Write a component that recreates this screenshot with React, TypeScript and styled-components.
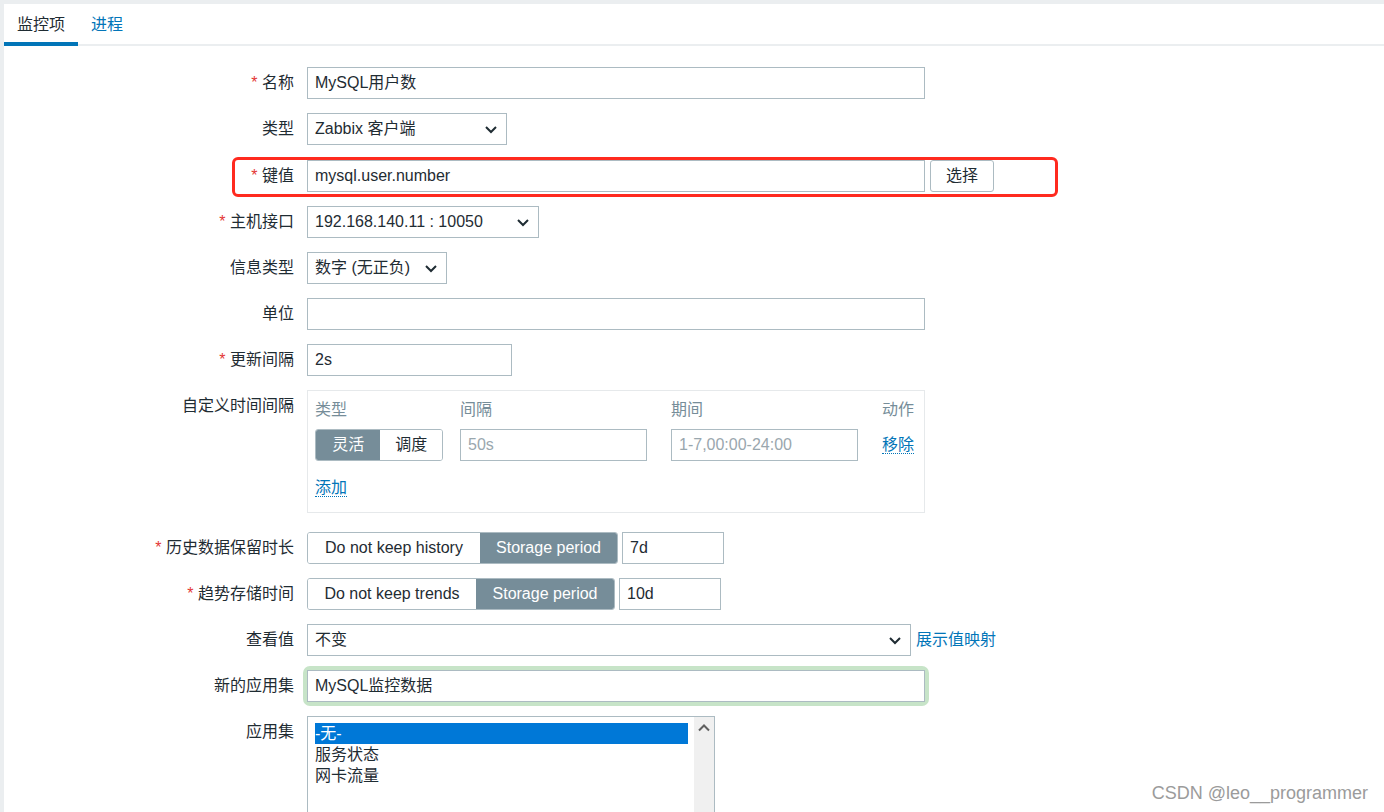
import React, { ReactElement } from 'react';
import styled, { createGlobalStyle } from 'styled-components';

const GlobalStyle = createGlobalStyle`
  html, body {
    margin: 0;
    padding: 0;
    background: #ebeef0;
    font-family: 'Liberation Sans', 'Noto Sans CJK SC', sans-serif;
    font-size: 16px;
    color: #1f2c33;
  }
  * {
    box-sizing: border-box;
  }
`;

const Page = styled.div`
  position: relative;
  height: 812px;
  overflow: hidden;
  padding: 4px 0 0 4px;
`;

const Panel = styled.div`
  background: #fff;
  height: 100%;
`;

const TabBar = styled.div`
  display: flex;
  height: 42px;
  border-bottom: 2px solid #ebeef0;
`;

const Tab = styled.div<{ $active?: boolean }>`
  padding: 4px 13px 0;
  height: 42px;
  line-height: 34px;
  color: ${(p) => (p.$active ? '#1f2c33' : '#0275b8')};
  border-bottom: 4px solid ${(p) => (p.$active ? '#0275b8' : 'transparent')};
`;

const Form = styled.div`
  display: flex;
  flex-direction: column;
  gap: 14px;
  padding-top: 21px;
`;

const Row = styled.div<{ $mt?: number; $mb?: number }>`
  position: relative;
  display: grid;
  grid-template-columns: 290px 1fr;
  column-gap: 13px;
  align-items: start;
  margin-top: ${(p) => p.$mt || 0}px;
  margin-bottom: ${(p) => p.$mb || 0}px;
`;

const Label = styled.div<{ $required?: boolean }>`
  text-align: right;
  line-height: 32px;
  white-space: nowrap;

  &::before {
    content: ${(p) => (p.$required ? "'* '" : "''")};
    color: #e33734;
  }
`;

const Field = styled.div`
  display: flex;
  align-items: center;
  gap: 5px;
`;

const Input = styled.div<{ $w: number; $muted?: boolean }>`
  width: ${(p) => p.$w}px;
  height: 32px;
  line-height: 30px;
  border: 1px solid #acbbc2;
  background: #fff;
  padding: 0 7px;
  color: ${(p) => (p.$muted ? '#9aa7ae' : '#1f2c33')};
  white-space: nowrap;
  overflow: hidden;
`;

const Select = styled(Input)`
  display: flex;
  align-items: center;
  justify-content: space-between;
  padding-right: 8px;
`;

const Button = styled.div`
  height: 32px;
  line-height: 30px;
  padding: 0 15px;
  border: 1px solid #acbbc2;
  border-radius: 3px;
  background: #fff;
`;

const Segmented = styled.div`
  display: flex;
  height: 32px;
  border: 1px solid #acbbc2;
  border-radius: 3px;
  overflow: hidden;
`;

const Segment = styled.div<{ $active?: boolean; $w: number }>`
  width: ${(p) => p.$w}px;
  text-align: center;
  line-height: 30px;
  white-space: nowrap;
  background: ${(p) => (p.$active ? '#768d99' : '#fff')};
  color: ${(p) => (p.$active ? '#fff' : '#1f2c33')};
`;

const Link = styled.span<{ $dotted?: boolean }>`
  color: #0275b8;
  border-bottom: ${(p) => (p.$dotted ? '1px dotted #0275b8' : 'none')};
  line-height: 20px;
  white-space: nowrap;
`;

const Highlight = styled.div`
  position: absolute;
  left: 228px;
  top: -3px;
  width: 826px;
  height: 40px;
  border: 3px solid #ff2a1f;
  border-radius: 6px;
  pointer-events: none;
`;

const IntervalBox = styled.div`
  width: 618px;
  border: 1px solid #e6e9eb;
  padding: 8px 10px 13px 7px;
`;

const IntervalGrid = styled.div`
  display: grid;
  grid-template-columns: 145px 211px 211px 1fr;
  row-gap: 8px;
  align-items: center;
`;

const Head = styled.div<{ $right?: boolean }>`
  color: #768d99;
  line-height: 22px;
  white-space: nowrap;
  text-align: ${(p) => (p.$right ? 'right' : 'left')};
`;

const ActionCell = styled.div`
  text-align: right;
`;

const AddLine = styled.div`
  margin-top: 16px;
  line-height: 22px;
`;

const GlowWrap = styled.div`
  width: 618px;
  box-shadow: 0 0 0 4px #c7e4c8;
  border-radius: 3px;
`;

const ListBox = styled.div`
  width: 408px;
  height: 110px;
  border: 1px solid #acbbc2;
  display: flex;
`;

const ListItems = styled.div`
  flex: 1;
  padding: 6px 6px 0 7px;
`;

const ListItem = styled.div<{ $selected?: boolean }>`
  line-height: 21px;
  height: 21px;
  background: ${(p) => (p.$selected ? '#0078d7' : 'transparent')};
  color: ${(p) => (p.$selected ? '#fff' : '#1f2c33')};
`;

const ScrollTrack = styled.div`
  width: 20px;
  background: #f0f0f0;
  display: flex;
  justify-content: center;
  padding-top: 6px;
`;

const Watermark = styled.div`
  position: absolute;
  right: 16px;
  bottom: 8px;
  font-size: 18px;
  color: #9b9b9b;
  font-family: 'Liberation Sans', sans-serif;
`;

const Chevron = ({ up }: { up?: boolean }) => (
  <svg width="14" height="9" viewBox="0 0 14 9">
    <path
      d={up ? 'M2 7.5 L7 2.5 L12 7.5' : 'M2 2 L7 7 L12 2'}
      fill="none"
      stroke={up ? '#606060' : '#1f2c33'}
      strokeWidth="2"
    />
  </svg>
);

const App = (): ReactElement => (
  <Page>
    <GlobalStyle />
    <Panel>
      <TabBar>
        <Tab $active>监控项</Tab>
        <Tab>进程</Tab>
      </TabBar>
      <Form>
        <Row>
          <Label $required>名称</Label>
          <Field>
            <Input $w={618}>MySQL用户数</Input>
          </Field>
        </Row>
        <Row>
          <Label>类型</Label>
          <Field>
            <Select $w={200}>
              Zabbix 客户端
              <Chevron />
            </Select>
          </Field>
        </Row>
        <Row $mt={1}>
          <Label $required>键值</Label>
          <Field>
            <Input $w={618}>mysql.user.number</Input>
            <Button>选择</Button>
          </Field>
          <Highlight />
        </Row>
        <Row>
          <Label $required>主机接口</Label>
          <Field>
            <Select $w={232}>
              192.168.140.11 : 10050
              <Chevron />
            </Select>
          </Field>
        </Row>
        <Row>
          <Label>信息类型</Label>
          <Field>
            <Select $w={140}>
              数字 (无正负)
              <Chevron />
            </Select>
          </Field>
        </Row>
        <Row>
          <Label>单位</Label>
          <Field>
            <Input $w={618} />
          </Field>
        </Row>
        <Row>
          <Label $required>更新间隔</Label>
          <Field>
            <Input $w={205}>2s</Input>
          </Field>
        </Row>
        <Row $mb={5}>
          <Label>自定义时间间隔</Label>
          <IntervalBox>
            <IntervalGrid>
              <Head>类型</Head>
              <Head>间隔</Head>
              <Head>期间</Head>
              <Head $right>动作</Head>
              <Segmented style={{ width: 128 }}>
                <Segment $active $w={65}>灵活</Segment>
                <Segment $w={62}>调度</Segment>
              </Segmented>
              <Input $w={187} $muted>50s</Input>
              <Input $w={187} $muted>1-7,00:00-24:00</Input>
              <ActionCell>
                <Link $dotted>移除</Link>
              </ActionCell>
            </IntervalGrid>
            <AddLine>
              <Link $dotted>添加</Link>
            </AddLine>
          </IntervalBox>
        </Row>
        <Row>
          <Label $required>历史数据保留时长</Label>
          <Field>
            <Segmented>
              <Segment $w={172}>Do not keep history</Segment>
              <Segment $active $w={137}>Storage period</Segment>
            </Segmented>
            <Input $w={102} style={{ marginLeft: -1 }}>7d</Input>
          </Field>
        </Row>
        <Row>
          <Label $required>趋势存储时间</Label>
          <Field>
            <Segmented>
              <Segment $w={168}>Do not keep trends</Segment>
              <Segment $active $w={138}>Storage period</Segment>
            </Segmented>
            <Input $w={102} style={{ marginLeft: -1 }}>10d</Input>
          </Field>
        </Row>
        <Row>
          <Label>查看值</Label>
          <Field>
            <Select $w={604}>
              不变
              <Chevron />
            </Select>
            <Link>展示值映射</Link>
          </Field>
        </Row>
        <Row>
          <Label>新的应用集</Label>
          <Field>
            <GlowWrap>
              <Input $w={618}>MySQL监控数据</Input>
            </GlowWrap>
          </Field>
        </Row>
        <Row>
          <Label>应用集</Label>
          <ListBox>
            <ListItems>
              <ListItem $selected>-无-</ListItem>
              <ListItem>服务状态</ListItem>
              <ListItem>网卡流量</ListItem>
            </ListItems>
            <ScrollTrack>
              <Chevron up />
            </ScrollTrack>
          </ListBox>
        </Row>
      </Form>
    </Panel>
    <Watermark>CSDN @leo__programmer</Watermark>
  </Page>
);

export default App;
